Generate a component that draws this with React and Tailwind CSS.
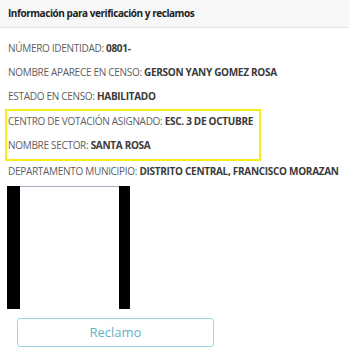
export default function App() {
  const font = { fontFamily: '"Open Sans", "Noto Sans", sans-serif' };
  const Row = ({ label, value }) => (
    <div className="leading-[20px] h-[20px] text-[10px] tracking-[-0.3px] text-[#5e5e5e] whitespace-nowrap">
      {label}: <span className="font-bold text-[#3a3a3a]">{value}</span>
    </div>
  );
  return (
    <div className="w-[349px] h-[360px] bg-white" style={font}>
      <div className="h-[28px] bg-[#f7f7f7] border-b border-[#e6e6e6] flex items-center px-[8px]">
        <span className="text-[10px] tracking-[-0.45px] font-bold text-[#222]">Información para verificación y reclamos</span>
      </div>
      <div className="px-[8px] pt-[10px] flex flex-col">
        <div className="flex flex-col gap-[4px]">
          <Row label="NÚMERO IDENTIDAD" value="0801-" />
          <Row label="NOMBRE APARECE EN CENSO" value="GERSON YANY GOMEZ ROSA" />
          <Row label="ESTADO EN CENSO" value="HABILITADO" />
        </div>
        <div className="mt-[3px] ml-[-3px] w-[256px] border-2 border-[#f5ec1a] pl-[1px] pb-[4px] flex flex-col gap-[4px]">
          <Row label="CENTRO DE VOTACIÓN ASIGNADO" value="ESC. 3 DE OCTUBRE" />
          <Row label="NOMBRE SECTOR" value="SANTA ROSA" />
        </div>
        <Row label="DEPARTAMENTO MUNICIPIO" value="DISTRITO CENTRAL, FRANCISCO MORAZAN" />
        <div className="mt-[5px] ml-[-1px] flex w-[123px] h-[123px]">
          <div className="w-[13px] h-full bg-black" />
          <div className="w-[99px] h-full bg-white border-t border-[#a9a9c6]" />
          <div className="w-[11px] h-full bg-black" />
        </div>
        <div className="mt-[9px] ml-[9px] w-[197px] h-[29px] border border-[#98d6e4] rounded-[3px] flex items-center justify-center text-[13px] text-[#5fb2c6]">
          Reclamo
        </div>
      </div>
    </div>
  );
}
